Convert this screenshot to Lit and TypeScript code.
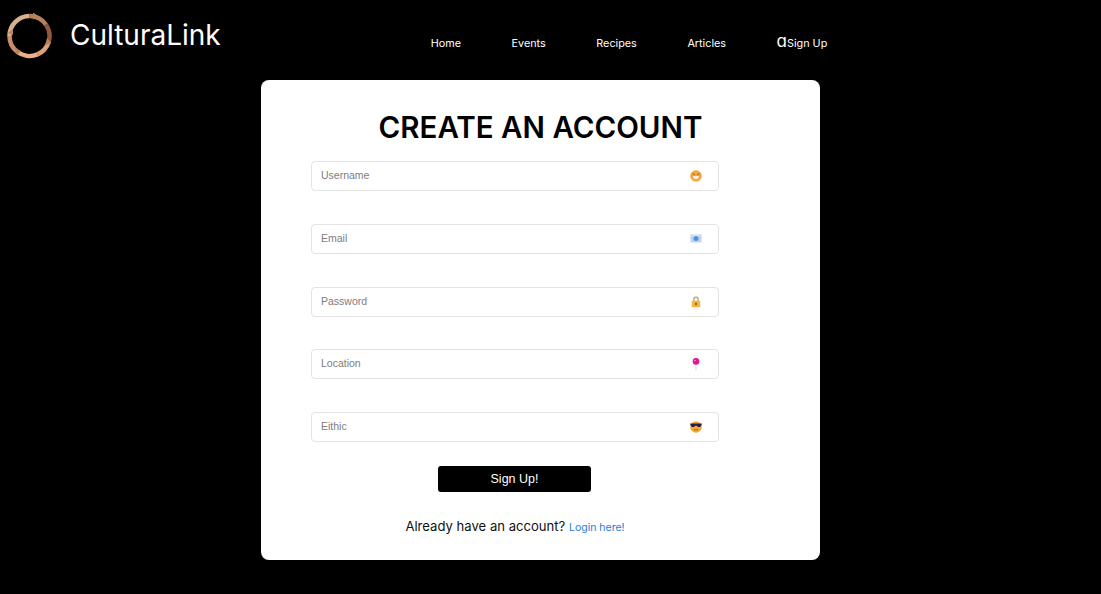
import { LitElement, html, css, svg } from 'lit';
import { customElement } from 'lit/decorators.js';

const icons = {
  grin: svg`
    <circle cx="6" cy="6" r="5.800" fill="#f5a836"/>
    <path d="M2.400 3.800 4.800 4.500M9.600 3.800 7.200 4.500" stroke="#9a5f1c" stroke-width=".9" fill="none"/>
    <path d="M2.300 5.500h7.400c0 2.700-1.700 4.200-3.700 4.200S2.300 8.200 2.300 5.500z" fill="#fbe9d6" stroke="#d9822e" stroke-width=".5"/>`,
  envelope: svg`
    <rect x=".5" y="1.500" width="11" height="8" fill="#c9cfe8"/>
    <path d="M.5 1.500 6 5l5.500-3.500z" fill="#e0e3f2"/>
    <circle cx="6" cy="5.600" r="2.500" fill="#3d9be0"/>`,
  lock: svg`
    <path d="M3.800 5.500V3.400a2.200 2.200 0 0 1 4.400 0v2.100" fill="none" stroke="#b9a27c" stroke-width="1.300"/>
    <rect x="1.800" y="4.800" width="8.400" height="6.400" rx="1" fill="#f4b63c"/>
    <rect x="5.200" y="6.600" width="1.600" height="2.600" fill="#8a5a12"/>`,
  pin: svg`
    <path d="M6 6v6" stroke="#dcd8de" stroke-width="1.100"/>
    <circle cx="6" cy="3.400" r="3.300" fill="#e4148f"/>
    <circle cx="5" cy="2.500" r=".8" fill="#f7a6d6"/>`,
  shades: svg`
    <circle cx="6" cy="6" r="5.800" fill="#f5a836"/>
    <path d="M.3 2.600h11.400v1.200L10.400 5.800c-1 .6-3 .4-3.500-1H5.100c-.5 1.400-2.500 1.600-3.500 1L.3 3.800z" fill="#241f4a"/>
    <path d="M4 8.400c1.200.8 2.800.8 4 0" stroke="#8a4a12" stroke-width=".8" fill="none"/>`,
};

const fields = [
  { label: 'Username', icon: icons.grin },
  { label: 'Email', icon: icons.envelope },
  { label: 'Password', icon: icons.lock },
  { label: 'Location', icon: icons.pin },
  { label: 'Eithic', icon: icons.shades },
];

@customElement('app-root')
export class AppRoot extends LitElement {
  static styles = css`
    :host {
      display: block;
      min-height: 594px;
      background: #000;
      font-family: 'Inter', 'Liberation Sans', sans-serif;
    }

    .header {
      display: flex;
      height: 80px;
      box-sizing: border-box;
      padding: 12px 0 0 5px;
    }

    .brand {
      display: flex;
      align-items: flex-start;
      gap: 18px;
      color: #fff;
      font-size: 28px;
      line-height: 46px;
    }

    .logo {
      width: 47px;
      height: 48px;
    }

    .nav {
      display: flex;
      align-items: baseline;
      gap: 50.600px;
      margin-left: 210px;
      padding-top: 25px;
      font-size: 10.800px;
      line-height: 14px;
      color: #fff;
    }

    .nav a {
      color: inherit;
      text-decoration: none;
    }

    .nav .glyph {
      font-size: 17px;
      line-height: 0;
    }

    .card {
      width: 559px;
      height: 480px;
      margin-left: 261px;
      box-sizing: border-box;
      padding: 27px 50px 0;
      background: #fff;
      border-radius: 8px;
    }

    h1 {
      margin: 0 0 14px;
      height: 40px;
      font-size: 29.500px;
      line-height: 40px;
      font-weight: 600;
      text-align: center;
      color: #000;
      white-space: nowrap;
    }

    .fields {
      display: flex;
      flex-direction: column;
      gap: 32.750px;
      width: 408px;
    }

    .field {
      position: relative;
      height: 30px;
    }

    input {
      display: block;
      width: 100%;
      height: 100%;
      box-sizing: border-box;
      padding: 0 40px 2px 9px;
      border: 1px solid #e3e3e3;
      border-radius: 4px;
      background: #fff;
      font: 10.500px 'Liberation Sans', Arial, sans-serif;
      outline: none;
    }

    input::placeholder {
      color: #7d7d7d;
    }

    .field svg {
      position: absolute;
      top: 9px;
      right: 17px;
      width: 12px;
      height: 12px;
    }

    .submit {
      display: block;
      width: 153px;
      height: 26px;
      margin: 24px 0 0 127px;
      border: 0;
      border-radius: 3px;
      background: #000;
      color: #fff;
      font: 12.500px 'Liberation Sans', Arial, sans-serif;
    }

    .login {
      width: 408px;
      margin-top: 25px;
      text-align: center;
      font-size: 13.100px;
      line-height: 18px;
      color: #111;
    }

    .login a {
      font-size: 10.500px;
      color: #2a7ad6;
      text-decoration: none;
    }
  `;

  render() {
    return html`
      <header class="header">
        <div class="brand">
          <svg class="logo" viewBox="0 0 47 48" fill="none" stroke-width="4.500">
            <path d="M24.500 4a20 20 0 0 1 16.500 8.700" stroke="#b9805c"/>
            <path d="M41 12.700a20 20 0 0 1 2.500 17.500" stroke="#8f5a3e"/>
            <path d="M43.500 30.200a20 20 0 0 1-11 12.200" stroke="#d9a07a"/>
            <path d="M32.500 42.400a20 20 0 0 1-20.500-2.800" stroke="#eeb08a"/>
            <path d="M12 39.600a20 20 0 0 1-7.500-15.600" stroke="#c98c66"/>
            <path d="M4.500 24a20 20 0 0 1 20-20" stroke="#d7b08e"/>
            <path d="M28 .5l7 5-7 2zM42 26l4.500 5-6 2zM10 36l6 3-4 4zM3 21l5-4v6z" fill="#b9805c" stroke="none"/>
          </svg>
          <span>CulturaLink</span>
        </div>
        <nav class="nav">
          <a>Home</a>
          <a>Events</a>
          <a>Recipes</a>
          <a>Articles</a>
          <a><span class="glyph">ɑ</span>Sign Up</a>
        </nav>
      </header>
      <main class="card">
        <h1>CREATE AN ACCOUNT</h1>
        <div class="fields">
          ${fields.map(
            (f) => html`
              <div class="field">
                <input type="text" placeholder=${f.label} />
                <svg viewBox="0 0 12 12">${f.icon}</svg>
              </div>
            `
          )}
        </div>
        <button class="submit">Sign Up!</button>
        <div class="login">Already have an account? <a>Login here!</a></div>
      </main>
    `;
  }
}
